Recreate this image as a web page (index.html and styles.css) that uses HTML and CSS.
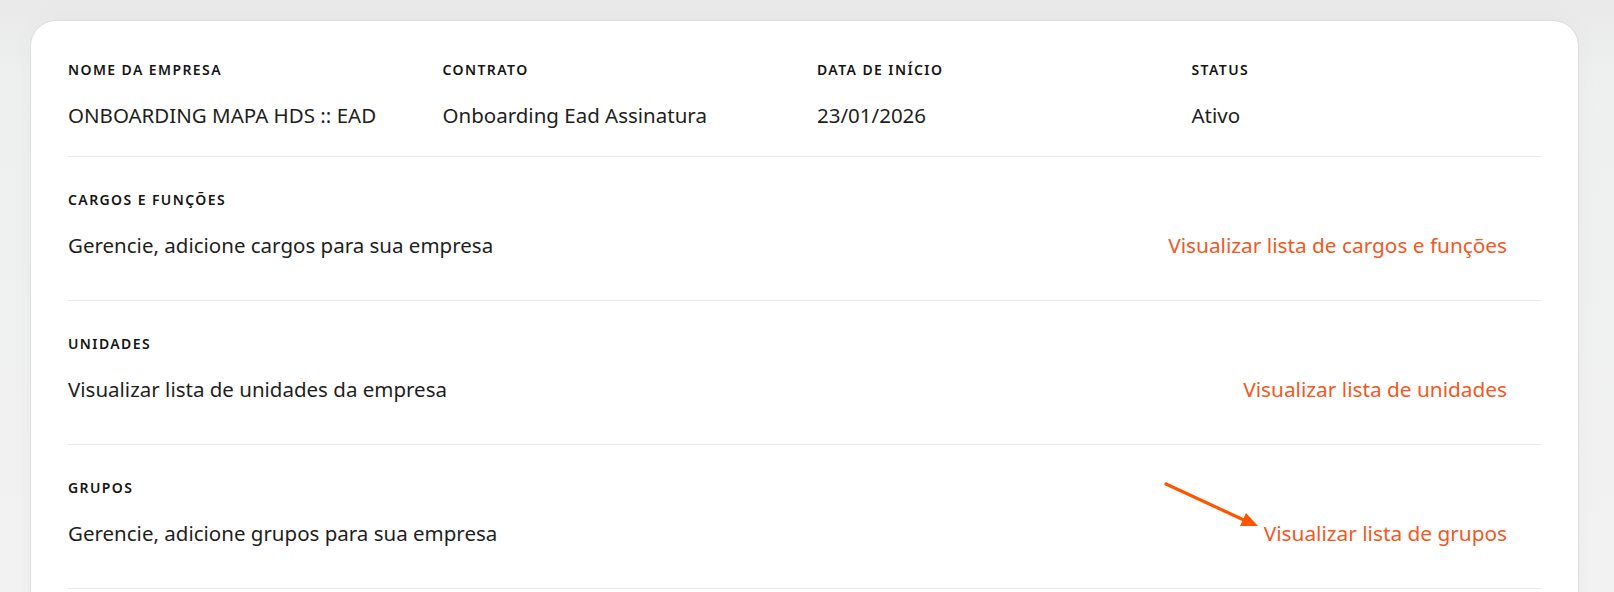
FILE: index.html
```html
<!DOCTYPE html>
<html lang="pt-BR">
<head>
<meta charset="utf-8">
<title>Empresa</title>
<link rel="stylesheet" href="styles.css">
</head>
<body>
<div class="page">
  <div class="card">
    <div class="info-row">
      <div class="info-col">
        <div class="label">NOME DA EMPRESA</div>
        <div class="value">ONBOARDING MAPA HDS :: EAD</div>
      </div>
      <div class="info-col">
        <div class="label">CONTRATO</div>
        <div class="value">Onboarding Ead Assinatura</div>
      </div>
      <div class="info-col">
        <div class="label">DATA DE INÍCIO</div>
        <div class="value">23/01/2026</div>
      </div>
      <div class="info-col">
        <div class="label">STATUS</div>
        <div class="value">Ativo</div>
      </div>
    </div>

    <div class="section">
      <div class="label">CARGOS E FUNÇÕES</div>
      <div class="section-line">
        <span class="desc">Gerencie, adicione cargos para sua empresa</span>
        <a class="link" href="#">Visualizar lista de cargos e funções</a>
      </div>
    </div>

    <div class="section">
      <div class="label">UNIDADES</div>
      <div class="section-line">
        <span class="desc">Visualizar lista de unidades da empresa</span>
        <a class="link" href="#">Visualizar lista de unidades</a>
      </div>
    </div>

    <div class="section">
      <div class="label">GRUPOS</div>
      <div class="section-line">
        <span class="desc">Gerencie, adicione grupos para sua empresa</span>
        <span class="link-wrap">
          <svg class="arrow" width="100" height="50" viewBox="0 0 100 50">
            <line x1="4" y1="4" x2="84" y2="41" stroke="#ff5500" stroke-width="3.2" stroke-linecap="round"/>
            <polygon points="96,46 78,46 84,33" fill="#ff5500"/>
          </svg>
          <a class="link" href="#">Visualizar lista de grupos</a>
        </span>
      </div>
    </div>
  </div>
</div>
</body>
</html>
```

FILE: styles.css
```css
html, body {
  margin: 0;
  padding: 0;
  height: 100%;
}
body {
  background: linear-gradient(180deg, #e8e9e8 0%, #eef0ef 12%, #f1f2f1 100%);
  font-family: "Noto Sans", "Open Sans", sans-serif;
  color: #1c1c1c;
  overflow: hidden;
}
.page {
  padding: 20px 35px 0 30px;
}
.card {
  background: #ffffff;
  border: 1px solid #dcdddc;
  border-radius: 26px;
  padding: 39px 37px 0 37px;
  min-height: 700px;
  box-shadow: 0 0 24px rgba(0, 0, 0, 0.03);
}
.label {
  font-size: 14px;
  line-height: 20px;
  font-weight: 600;
  letter-spacing: 1.4px;
  color: #151515;
}
.value {
  margin-top: 21px;
  font-size: 20.5px;
  line-height: 28px;
  color: #1e1e1e;
}
.info-row {
  display: grid;
  grid-template-columns: repeat(4, 350px);
  column-gap: 24.5px;
  padding-bottom: 27px;
  border-bottom: 1px solid #e8e8e8;
}
.section {
  padding: 33px 0 41px 0;
  border-bottom: 1px solid #e8e8e8;
}
.section-line {
  margin-top: 21px;
  display: flex;
  justify-content: space-between;
  align-items: center;
  padding-right: 34px;
  font-size: 20.5px;
  line-height: 28px;
}
.desc {
  color: #1e1e1e;
}
.link {
  color: #f2581f;
  text-decoration: none;
  font-size: 20.8px;
}
.link-wrap {
  position: relative;
}
.arrow {
  position: absolute;
  left: -102px;
  top: -39px;
}
```
